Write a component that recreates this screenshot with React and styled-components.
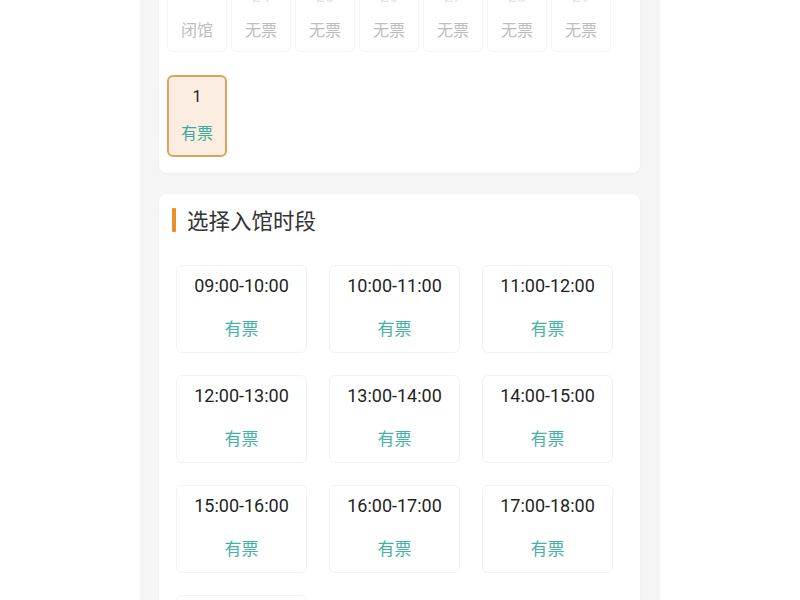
import React from "react";
import styled, { createGlobalStyle } from "styled-components";

const GlobalStyle = createGlobalStyle`
  html, body { margin: 0; padding: 0; background: #ffffff; }
  body {
    font-family: Roboto, "Noto Sans CJK SC", "Noto Sans", sans-serif;
    -webkit-font-smoothing: antialiased;
  }
  * { box-sizing: border-box; }
`;

const Page = styled.div`
  width: 520px;
  margin: 0 auto;
  min-height: 100vh;
  height: 600px;
  overflow: hidden;
  background: #f5f5f5;
  padding: 0 20px 0 19px;
  display: flex;
  flex-direction: column;
  gap: 21px;
`;

const Card = styled.section`
  background: #ffffff;
  border-radius: 8px;
  box-shadow: 0 1px 3px rgba(0, 0, 0, 0.04);
`;

const CalendarCard = styled(Card)`
  margin-top: -40px;
  padding: 10px 8px 16px;
`;

const DayGrid = styled.div`
  display: grid;
  grid-template-columns: repeat(7, 60px);
  column-gap: 4px;
  row-gap: 23px;
`;

const DayCell = styled.div`
  height: 82px;
  border-radius: 6px;
  display: flex;
  flex-direction: column;
  align-items: center;
  padding-top: ${(p) => (p.$selected ? "10px" : "16px")};
  gap: ${(p) => (p.$selected ? "17px" : "14px")};
  background: ${(p) => (p.$selected ? "#fbede2" : "#ffffff")};
  border: ${(p) => (p.$selected ? "2px solid #d9a55c" : "1px solid #f4f4f4")};
`;

const DayNum = styled.span`
  font-size: 16px;
  line-height: 20px;
  color: ${(p) => p.$color || "#222"};
`;

const DayStatus = styled.span`
  font-size: 16px;
  line-height: 20px;
  color: ${(p) => (p.$avail ? "#3bab9b" : "#bdbdbd")};
`;

const SlotCard = styled(Card)`
  padding: 14px 0 22px;
`;

const TitleRow = styled.div`
  display: flex;
  align-items: center;
  gap: 11px;
  padding-left: 13px;
  height: 24px;
`;

const TitleBar = styled.span`
  width: 4px;
  height: 24px;
  border-radius: 1px;
  background: #e8912c;
`;

const Title = styled.h2`
  margin: 0;
  font-size: 21.5px;
  font-weight: 400;
  color: #333;
  font-family: "Noto Sans CJK SC", sans-serif;
  line-height: 24px;
`;

const SlotGrid = styled.div`
  display: grid;
  grid-template-columns: repeat(3, 131px);
  gap: 22px;
  padding: 33px 17px 0;
`;

const Slot = styled.div`
  height: 88px;
  border: 1px solid #f2f2f2;
  border-radius: 6px;
  display: flex;
  flex-direction: column;
  align-items: center;
  padding-top: 9px;
  gap: 20px;
`;

const SlotTime = styled.span`
  font-size: 18px;
  line-height: 22px;
  color: #1f1f1f;
`;

const SlotStatus = styled.span`
  font-size: 17px;
  line-height: 22px;
  color: #46b2a4;
  font-family: "Noto Sans CJK SC", sans-serif;
`;

const topRow = [
  { num: "•", color: "#f0d070", status: "闭馆" },
  { num: "24", color: "#e4e4e4", status: "无票" },
  { num: "25", color: "#e4e4e4", status: "无票" },
  { num: "26", color: "#e4e4e4", status: "无票" },
  { num: "27", color: "#e4e4e4", status: "无票" },
  { num: "28", color: "#e4e4e4", status: "无票" },
  { num: "29", color: "#e4e4e4", status: "无票" },
];

const slots = [
  "09:00-10:00",
  "10:00-11:00",
  "11:00-12:00",
  "12:00-13:00",
  "13:00-14:00",
  "14:00-15:00",
  "15:00-16:00",
  "16:00-17:00",
  "17:00-18:00",
  "18:00-19:00",
];

export default function App() {
  return (
    <>
      <GlobalStyle />
      <Page>
        <CalendarCard>
          <DayGrid>
            {topRow.map((d, i) => (
              <DayCell key={i}>
                <DayNum $color={d.color}>{d.num}</DayNum>
                <DayStatus>{d.status}</DayStatus>
              </DayCell>
            ))}
            <DayCell $selected>
              <DayNum>1</DayNum>
              <DayStatus $avail>有票</DayStatus>
            </DayCell>
          </DayGrid>
        </CalendarCard>
        <SlotCard>
          <TitleRow>
            <TitleBar />
            <Title>选择入馆时段</Title>
          </TitleRow>
          <SlotGrid>
            {slots.map((s) => (
              <Slot key={s}>
                <SlotTime>{s}</SlotTime>
                <SlotStatus>有票</SlotStatus>
              </Slot>
            ))}
          </SlotGrid>
        </SlotCard>
      </Page>
    </>
  );
}
